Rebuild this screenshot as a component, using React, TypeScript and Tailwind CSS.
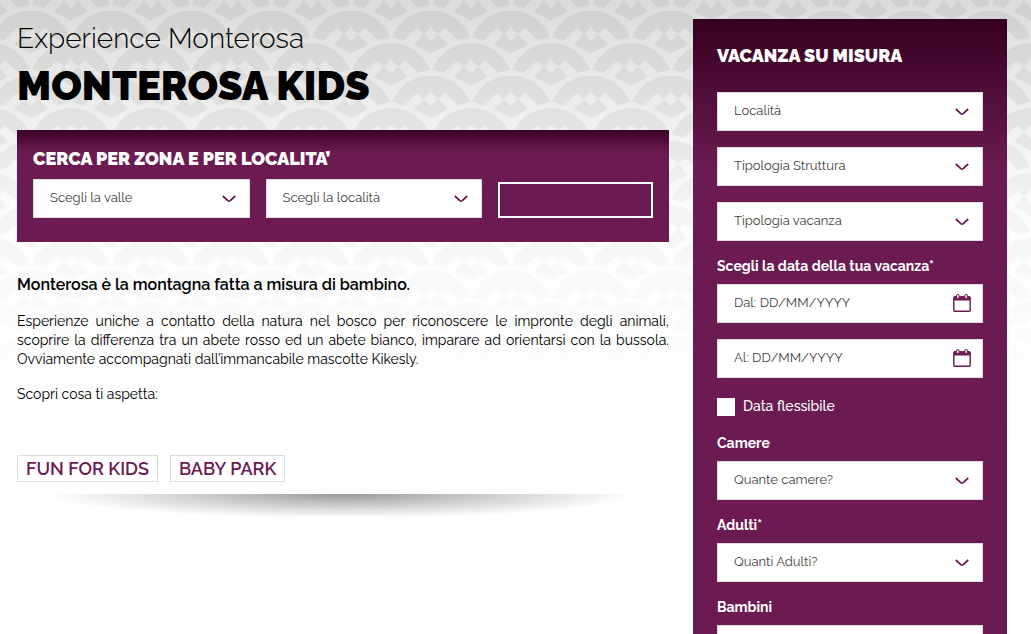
import React from "react";

function Chevron() {
  return (
    <svg
      className="pointer-events-none absolute top-4 right-3.5 h-2 w-3.5"
      viewBox="0 0 14 8"
      fill="none"
      stroke="#6b1b51"
      strokeWidth="1.8"
      aria-hidden="true"
    >
      <path d="M0.8 1 L5.8 5.6 Q7 6.6 8.2 5.6 L13.2 1" />
    </svg>
  );
}

function CalendarIcon() {
  return (
    <svg
      className="pointer-events-none absolute top-2.5 right-3 h-[18px] w-[18px]"
      viewBox="0 0 18 18"
      fill="none"
      aria-hidden="true"
    >
      <rect x="0.8" y="3" width="16.4" height="14.2" rx="1" stroke="#6b1b51" strokeWidth="1.4" />
      <path d="M1 2.2h16v4.3H1z" fill="#6b1b51" />
      <rect x="3.4" y="0.5" width="2.8" height="4" rx="1.3" fill="#e9dce5" stroke="#6b1b51" />
      <rect x="11.8" y="0.5" width="2.8" height="4" rx="1.3" fill="#e9dce5" stroke="#6b1b51" />
    </svg>
  );
}

function SelectBox({ label, className = "" }: { label: string; className?: string }) {
  return (
    <div className={`relative ${className}`}>
      <select
        aria-label={label}
        className="block h-[39px] w-full appearance-none border border-[#dddddd] bg-white pr-8 pb-0.5 pl-4 text-[13px] text-[#444444]"
      >
        <option>{label}</option>
      </select>
      <Chevron />
    </div>
  );
}

function DateBox({ label }: { label: string }) {
  return (
    <div className="relative mb-4">
      <input
        type="text"
        aria-label={label}
        placeholder={label}
        className="block h-[39px] w-full border border-[#dddddd] bg-white pr-10 pb-0.5 pl-4 text-[13px] text-[#444444] placeholder:text-[#444444]"
      />
      <CalendarIcon />
    </div>
  );
}

function LabelledSelect({ title, label }: { title: string; label: string }) {
  return (
    <div className="mb-4">
      <h3 className="mb-2 text-sm leading-[19px] font-bold">{title}</h3>
      <SelectBox label={label} />
    </div>
  );
}

function Scale({ x, y }: { x: number; y: number }) {
  return (
    <g transform={`translate(${x} ${y})`}>
      <path fill="#fff" d="M-39 26 A42 42 0 0 1 39 26 Q20 30 0 42.5 Q-20 30 -39 26Z" />
      <path fill="#000" d="M-14 17 L-7 23 L-18 34.5 L-29 31Z M14 17 L7 23 L18 34.5 L29 31Z M0 16 L7 23 L0 30 L-7 23Z" />
    </g>
  );
}

function ScalesBackground() {
  return (
    <svg className="absolute inset-x-0 top-0 -z-10 h-[460px] w-full" aria-hidden="true">
      <defs>
        <linearGradient id="light" x1="0" y1="0" x2="0" y2="1">
          <stop offset="0" stopColor="#dcdcdb" />
          <stop offset="0.28" stopColor="#f1f1f1" />
          <stop offset="0.48" stopColor="#fdfdfd" />
          <stop offset="1" stopColor="#ffffff" />
        </linearGradient>
        <linearGradient id="dark" x1="0" y1="0" x2="0" y2="1">
          <stop offset="0" stopColor="#cfcfcd" />
          <stop offset="0.28" stopColor="#e4e4e4" />
          <stop offset="0.44" stopColor="#f3f3f3" />
          <stop offset="0.58" stopColor="#f8f8f8" />
          <stop offset="0.75" stopColor="#fcfcfc" />
          <stop offset="0.93" stopColor="#ffffff" />
        </linearGradient>
        <pattern id="scales" width="80" height="65" patternUnits="userSpaceOnUse" x="71" y="11">
          <Scale x={0} y={-32.5} />
          <Scale x={80} y={-32.5} />
          <Scale x={40} y={0} />
          <Scale x={0} y={32.5} />
          <Scale x={80} y={32.5} />
        </pattern>
        <mask id="scaleMask">
          <rect width="100%" height="100%" fill="url(#scales)" />
        </mask>
      </defs>
      <rect width="100%" height="100%" fill="url(#light)" />
      <rect width="100%" height="100%" fill="url(#dark)" mask="url(#scaleMask)" />
    </svg>
  );
}

export default function App() {
  return (
    <div className="relative isolate flex h-screen items-start gap-6 overflow-hidden bg-white pr-6 pl-[17px] font-['Raleway','Lato',sans-serif] text-black">
      <ScalesBackground />

      <main className="min-w-0 flex-1 pt-[21px]">
        <h2 className="text-[28px] leading-9 font-light">Experience Monterosa</h2>
        <h1 className="mt-[5px] text-[40px] leading-12 font-black">MONTEROSA KIDS</h1>

        <section className="mt-5 bg-[#6b1b51] bg-[linear-gradient(#3a0226,#6b1b51_22px)] px-4 pt-[17px] pb-6">
          <h2 className="text-lg leading-6 font-black text-white">CERCA PER ZONA E PER LOCALITA’</h2>
          <div className="mt-2 flex items-end gap-4">
            <SelectBox label="Scegli la valle" className="flex-[7]" />
            <SelectBox label="Scegli la località" className="flex-[7]" />
            <button type="button" aria-label="Cerca" className="h-9 w-[155px] border-2 border-white" />
          </div>
        </section>

        <p className="mt-[33px] text-base leading-5 font-semibold">
          Monterosa è la montagna fatta a misura di bambino.
        </p>
        <p className="mt-[17px] text-justify text-sm leading-[19px]">
          Esperienze uniche a contatto della natura nel bosco per riconoscere le impronte degli animali, scoprire la
          differenza tra un abete rosso ed un abete bianco, imparare ad orientarsi con la bussola. Ovviamente
          accompagnati dall’immancabile mascotte Kikesly.
        </p>
        <p className="mt-4 text-sm leading-[19px]">Scopri cosa ti aspetta:</p>

        <nav className="mt-[51px] flex gap-3 text-lg leading-[25px] font-semibold text-[#6b1b51]">
          <a href="#fun-for-kids" className="border border-[#dddddd] bg-white px-2">
            FUN FOR KIDS
          </a>
          <a href="#baby-park" className="border border-[#dddddd] bg-white px-2">
            BABY PARK
          </a>
        </nav>
        <div className="mx-auto mt-3 h-6 w-[90%] bg-[radial-gradient(ellipse_50%_100%_at_50%_0,#999999,#c4c4c4_40%,#e7e7e7_75%,#ffffff)]" />
      </main>

      <aside className="mt-[19px] w-[314px] shrink-0 bg-[#6b1b51] bg-[linear-gradient(#350020,#6b1b51_150px)] px-6 pt-6 pb-6 text-white">
        <h2 className="mb-6 text-lg leading-[25px] font-black">VACANZA SU MISURA</h2>
        <div className="mb-4 flex flex-col gap-4">
          <SelectBox label="Località" />
          <SelectBox label="Tipologia Struttura" />
          <SelectBox label="Tipologia vacanza" />
        </div>
        <h3 className="mb-2 text-sm leading-[19px] font-bold">Scegli la data della tua vacanza*</h3>
        <DateBox label="Dal: DD/MM/YYYY" />
        <DateBox label="Al: DD/MM/YYYY" />
        <label className="mt-[19px] mb-[18px] flex items-center gap-2 text-sm leading-[19px] font-medium">
          <input type="checkbox" className="h-[18px] w-[18px] appearance-none bg-white" />
          Data flessibile
        </label>
        <LabelledSelect title="Camere" label="Quante camere?" />
        <LabelledSelect title="Adulti*" label="Quanti Adulti?" />
        <LabelledSelect title="Bambini" label="Quanti Bambini?" />
      </aside>
    </div>
  );
}
